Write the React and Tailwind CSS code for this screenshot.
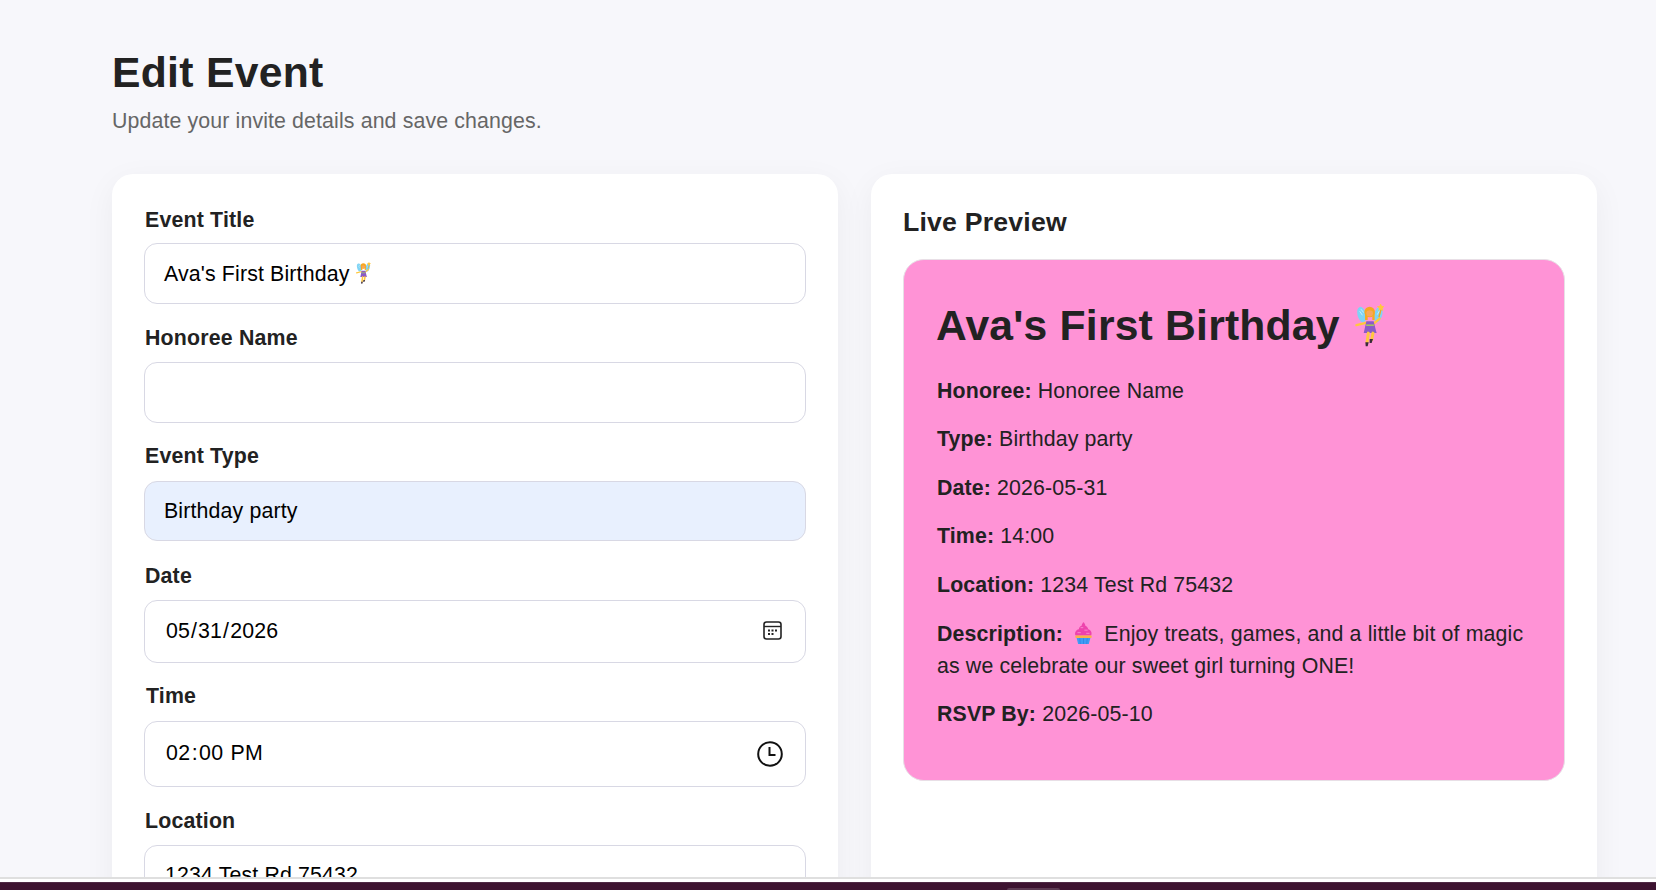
const Fairy = ({ className }) => (
  <svg viewBox="45 40 90 130" className={className} aria-hidden="true">
    <ellipse cx="68" cy="72" rx="13" ry="24" fill="#7fd4f5" transform="rotate(-14 68 72)" />
    <ellipse cx="118" cy="72" rx="12" ry="24" fill="#7fd4f5" transform="rotate(14 118 72)" />
    <path d="M62 62l8 12M66 56l8 10M122 60l-7 12" stroke="#d7f2fb" strokeWidth="2.5" />
    <path d="M120 80l8-30" stroke="#f4a81c" strokeWidth="4" />
    <path d="M125 38l4 8 8 1-6 6 2 8-8-4-7 4 2-8-6-6 8-1z" fill="#ffc83d" />
    <path d="M106 98l16-14" stroke="#ffc83d" strokeWidth="7" strokeLinecap="round" />
    <path d="M84 96l-32 8" stroke="#ffc83d" strokeWidth="7" strokeLinecap="round" />
    <circle cx="92" cy="64" r="16" fill="#f6a821" />
    <path d="M78 66v22h8V66zM100 66v22h7V66z" fill="#f6a821" />
    <circle cx="92" cy="68" r="10" fill="#f9a65a" />
    <path d="M80 62c4-10 20-10 24 0-8-4-16-4-24 0z" fill="#f6a821" />
    <path d="M82 92h22l9 36H74z" fill="#8a5cc7" />
    <rect x="81" y="102" width="24" height="4" fill="#a8d84a" />
    <path d="M88 128l-4 28" stroke="#ffc83d" strokeWidth="9" strokeLinecap="round" />
    <path d="M102 128l-4 20" stroke="#ffc83d" strokeWidth="9" strokeLinecap="round" />
    <path d="M79 156h10l-3 12h-6zM92 146h10l-4 12h-6z" fill="#3a2a3a" />
  </svg>
);

const Cupcake = ({ className }) => (
  <svg viewBox="40 20 60 70" className={className} aria-hidden="true">
    <path d="M48 70h44l-5 20H53z" fill="#3f9cf5" />
    <path d="M58 72l2 18M70 72v18M82 72l-2 18" stroke="#2a7de0" strokeWidth="2" />
    <rect x="44" y="62" width="52" height="9" rx="3" fill="#f9b24a" />
    <path d="M44 62c-3-10 4-18 11-19 1-7 6-10 9-11 1-5 3-9 6-11 3 2 5 6 6 11 4 2 8 5 9 11 7 2 13 9 10 19z" fill="#ee43ad" />
    <path d="M52 54h8M74 46h8M62 38h6M80 56h8" stroke="#f98ad0" strokeWidth="3" strokeLinecap="round" />
  </svg>
);

const CalendarIcon = () => (
  <svg viewBox="0 0 19 19" className="w-[19px] h-[19px] text-[#222]" fill="none" aria-hidden="true">
    <rect x="1" y="1" width="17" height="17" rx="2.5" stroke="currentColor" strokeWidth="1.6" />
    <path d="M1 5.5h17" stroke="currentColor" strokeWidth="1.4" />
    <path d="M5 8.5h2v2H5zM8.5 8.5h2v2h-2zM12 8.5h2v2h-2zM5 12h2v2H5zM8.5 12h2v2h-2z" fill="currentColor" />
  </svg>
);

const ClockIcon = () => (
  <svg viewBox="0 0 26 26" className="w-[26px] h-[26px] text-[#111]" fill="none" aria-hidden="true">
    <circle cx="13" cy="13" r="11.8" stroke="currentColor" strokeWidth="2" />
    <path d="M12.5 6v8h6" stroke="currentColor" strokeWidth="2" />
  </svg>
);

const inputClass =
  "block w-full rounded-[13px] border border-[#d8d8e4] bg-white pl-[19px] pr-[18px] text-[21.33px] tracking-[0.14px] text-black outline-none";
const labelClass = "block font-bold text-[21.33px] leading-[24.5px] tracking-[0.18px] text-[#222]";
const nativeClass =
  "[&::-webkit-calendar-picker-indicator]:hidden";

function Row({ label, value }) {
  return (
    <p className="mb-[16.5px] text-[21.33px] leading-[32px] tracking-[0.14px] text-[#222]">
      <strong className="font-bold">{label}</strong> {value}
    </p>
  );
}

export default function App() {
  return (
    <div className="h-[890px] w-[1656px] flex flex-col overflow-hidden bg-[#f7f7fb] font-['Liberation_Sans',Arial,sans-serif]">
      <main className="h-[877px] shrink-0 overflow-hidden pl-[112px] pr-[59px] pt-[47px]">
        <h1 className="text-[42.67px] leading-[50px] tracking-[0.3px] font-bold text-[#222]">Edit Event</h1>
        <p className="mt-[12px] text-[21.33px] leading-[24.5px] tracking-[0.12px] text-[#666]">
          Update your invite details and save changes.
        </p>
        <div className="mt-[40px] grid grid-cols-[726px_726px] gap-[33px]">
          <section className="h-[800px] rounded-[21px] bg-white px-[32px] pt-[34px] shadow-[0_8px_32px_rgba(0,0,0,0.05)]">
            <label className={`${labelClass} pl-[1px]`}>Event Title</label>
            <div className="mt-[10.5px] flex h-[61px] items-center gap-[6px] rounded-[13px] border border-[#d8d8e4] bg-white pl-[19px] pt-[4px] text-[21.33px] tracking-[0.14px] text-black">
              <span>Ava's First Birthday</span>
              <Fairy className="-mt-[4px] w-[16px] h-[22px]" />
            </div>

            <label className={`${labelClass} mt-[22px] pl-[1px]`}>Honoree Name</label>
            <input className={`${inputClass} mt-[11.5px] h-[61px]`} defaultValue="" />

            <label className={`${labelClass} mt-[21.5px] pl-[1px]`}>Event Type</label>
            <input
              className={`${inputClass} mt-[12.5px] h-[60px] !bg-[#e8f0fe]`}
              defaultValue="Birthday party"
            />

            <label className={`${labelClass} mt-[23px] pl-[1px]`}>Date</label>
            <div className="relative mt-[11.5px]">
              <input
                type="date"
                className={`${inputClass} ${nativeClass} !pl-[20px] h-[63px]`}
                defaultValue="2026-05-31"
              />
              <span className="absolute right-[24px] top-[21px] flex">
                <CalendarIcon />
              </span>
            </div>

            <label className={`${labelClass} mt-[21px] pl-[2px]`}>Time</label>
            <div className="relative mt-[12.5px]">
              <input
                type="time"
                className={`${inputClass} ${nativeClass} !pl-[20px] !tracking-[0.45px] h-[66px]`}
                defaultValue="14:00"
              />
              <span className="absolute right-[23px] top-[20px] flex">
                <ClockIcon />
              </span>
            </div>

            <label className={`${labelClass} mt-[22px] pl-[1px]`}>Location</label>
            <input className={`${inputClass} !pl-[20px] mt-[11.5px] h-[61px]`} defaultValue="1234 Test Rd 75432" />
          </section>

          <section className="h-[800px] rounded-[21px] bg-white px-[32px] pt-[33px] shadow-[0_8px_32px_rgba(0,0,0,0.05)]">
            <h2 className="text-[26.67px] leading-[31px] tracking-[0.2px] font-bold text-[#222]">Live Preview</h2>
            <div className="mt-[21px] h-[522px] rounded-[21px] border border-[#e8dfe6] bg-[#ff93d6] px-[33px] pt-[41px]">
              <h3 className="-ml-[1px] flex items-center gap-[14px] text-[42.67px] leading-[49px] tracking-[0.2px] font-bold text-[#222]">
                <span>Ava's First Birthday</span>
                <Fairy className="w-[30px] h-[43px]" />
              </h3>
              <div className="mt-[25px]">
                <Row label="Honoree:" value="Honoree Name" />
                <Row label="Type:" value="Birthday party" />
                <Row label="Date:" value="2026-05-31" />
                <Row label="Time:" value="14:00" />
                <Row label="Location:" value="1234 Test Rd 75432" />
                <p className="mt-[17.5px] mb-[15.5px] text-[21.33px] leading-[32px] tracking-[0.14px] text-[#222]">
                  <strong className="font-bold">Description:</strong>{" "}
                  <Cupcake className="mx-[5px] inline-block w-[19px] h-[22px] align-[-3px]" />{" "}
                  Enjoy treats, games, and a little bit of magic as we celebrate our sweet girl turning ONE!
                </p>
                <Row label="RSVP By:" value="2026-05-10" />
              </div>
            </div>
          </section>
        </div>
      </main>
      <div className="h-[5px] shrink-0 border-t-2 border-[#dfdfdf] bg-white" />
      <div className="h-[8px] shrink-0 bg-[#3d1330] border-t border-[#4f2a45] pl-[1007px]">
        <div className="mt-[5px] h-[2px] w-[53px] rounded-t-md bg-[#5c3a52]" />
      </div>
    </div>
  );
}
